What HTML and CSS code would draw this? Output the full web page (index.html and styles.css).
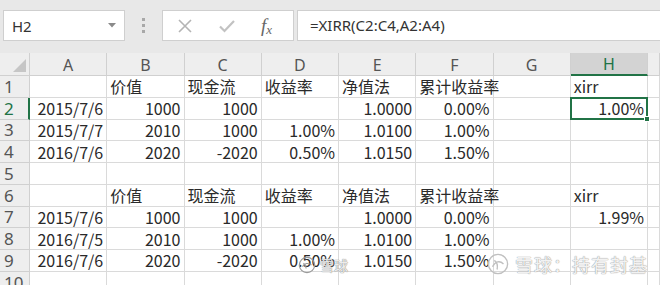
FILE: index.html
```html
<!DOCTYPE html>
<html lang="zh-CN">
<head>
<meta charset="utf-8">
<title>XIRR</title>
<link rel="stylesheet" href="styles.css">
</head>
<body>
<div class="app">
  <div class="toolbar">
    <div class="namebox">
      <span class="name">H2</span>
      <svg class="caret" width="8" height="5" viewBox="0 0 8 5"><path d="M0 0h8L4 4.5z" fill="#8a8a8a"/></svg>
    </div>
    <div class="grip"><i></i><i></i><i></i></div>
    <div class="btns">
      <svg width="16" height="16" viewBox="0 0 16 16"><path d="M2 2l12 12M14 2L2 14" stroke="#b4b4b4" stroke-width="1.6" fill="none"/></svg>
      <svg width="18" height="16" viewBox="0 0 18 16"><path d="M2 8.5l4.5 4.5L16 3" stroke="#c2c2c2" stroke-width="2.2" fill="none"/></svg>
      <span class="fx">f<sub>x</sub></span>
    </div>
    <div class="formula">=XIRR(C2:C4,A2:A4)</div>
  </div>

  <div class="sheet">
    <div class="hd corner"><span class="tri"></span></div>
    <div class="hd col">A</div><div class="hd col">B</div><div class="hd col">C</div><div class="hd col">D</div>
    <div class="hd col">E</div><div class="hd col">F</div><div class="hd col">G</div><div class="hd col sel">H</div><div class="hd col"></div>

    <div class="hd row">1</div>
    <div class="c"></div><div class="c">价值</div><div class="c">现金流</div><div class="c">收益率</div><div class="c">净值法</div><div class="c">累计收益率</div><div class="c"></div><div class="c">xirr</div><div class="c"></div>

    <div class="hd row sel">2</div>
    <div class="c n">2015/7/6</div><div class="c n">1000</div><div class="c n">1000</div><div class="c"></div><div class="c n">1.0000</div><div class="c n">0.00%</div><div class="c"></div><div class="c n active">1.00%<span class="handle"></span></div><div class="c"></div>

    <div class="hd row">3</div>
    <div class="c n">2015/7/7</div><div class="c n">2010</div><div class="c n">1000</div><div class="c n">1.00%</div><div class="c n">1.0100</div><div class="c n">1.00%</div><div class="c"></div><div class="c"></div><div class="c"></div>

    <div class="hd row">4</div>
    <div class="c n">2016/7/6</div><div class="c n">2020</div><div class="c n">-2020</div><div class="c n">0.50%</div><div class="c n">1.0150</div><div class="c n">1.50%</div><div class="c"></div><div class="c"></div><div class="c"></div>

    <div class="hd row">5</div>
    <div class="c"></div><div class="c"></div><div class="c"></div><div class="c"></div><div class="c"></div><div class="c"></div><div class="c"></div><div class="c"></div><div class="c"></div>

    <div class="hd row">6</div>
    <div class="c"></div><div class="c">价值</div><div class="c">现金流</div><div class="c">收益率</div><div class="c">净值法</div><div class="c">累计收益率</div><div class="c"></div><div class="c">xirr</div><div class="c"></div>

    <div class="hd row">7</div>
    <div class="c n">2015/7/6</div><div class="c n">1000</div><div class="c n">1000</div><div class="c"></div><div class="c n">1.0000</div><div class="c n">0.00%</div><div class="c"></div><div class="c n">1.99%</div><div class="c"></div>

    <div class="hd row">8</div>
    <div class="c n">2016/7/5</div><div class="c n">2010</div><div class="c n">1000</div><div class="c n">1.00%</div><div class="c n">1.0100</div><div class="c n">1.00%</div><div class="c"></div><div class="c"></div><div class="c"></div>

    <div class="hd row">9</div>
    <div class="c n">2016/7/6</div><div class="c n">2020</div><div class="c n">-2020</div><div class="c n">0.50%</div><div class="c n">1.0150</div><div class="c n">1.50%</div><div class="c"></div><div class="c"></div><div class="c"></div>

    <div class="hd row">10</div>
    <div class="c"></div><div class="c"></div><div class="c"></div><div class="c"></div><div class="c"></div><div class="c"></div><div class="c"></div><div class="c"></div><div class="c"></div>
  </div>

  <div class="mark small">
    <svg width="18" height="18" viewBox="0 0 20 20"><circle cx="10" cy="10" r="8.5" fill="none" stroke="#9a9a9a" stroke-width="1.3"/><path d="M5 12c2-4 6-5 10-2M6 8c2 1 3 3 3 6" stroke="#9a9a9a" stroke-width="1.2" fill="none"/></svg>
    <span>雪球</span>
  </div>
  <div class="mark big">
    <svg width="22" height="22" viewBox="0 0 24 24"><circle cx="12" cy="12" r="10.5" fill="none" stroke="#c0c0c0" stroke-width="1.5"/><path d="M6 15c3-6 8-7 12-3M8 8c3 2 4 5 3 10" stroke="#c0c0c0" stroke-width="1.5" fill="none"/></svg>
    <span>雪球：持有封基</span>
  </div>
</div>
</body>
</html>
```

FILE: styles.css
```css
* { box-sizing: border-box; }
html, body { margin: 0; padding: 0; }
body {
  width: 660px;
  height: 285px;
  overflow: hidden;
  background: #e8e8e8;
  font-family: "Noto Sans CJK SC", "Noto Sans", sans-serif;
  color: #333;
}
/* the window clips the sheet at its lower edge, mid-way through row 10 */
.app { position: relative; width: 660px; height: 285px; overflow: hidden; }

/* formula bar */
.toolbar {
  display: flex;
  align-items: center;
  height: 53px;
  padding: 0 0 2px 3px;
}
.namebox {
  width: 122px;
  height: 31px;
  background: #fff;
  border: 1px solid #cfcfcf;
  display: flex;
  align-items: center;
  justify-content: space-between;
  padding: 0 8px 0 8px;
}
.name { font-size: 15px; color: #333; font-family: "Noto Sans", sans-serif; }
.grip {
  width: 37px;
  display: flex;
  flex-direction: column;
  align-items: center;
  gap: 3px;
}
.grip i { width: 3px; height: 3px; background: #a8a8a8; display: block; }
.btns {
  width: 132px;
  height: 31px;
  background: #fff;
  border: 1px solid #cfcfcf;
  display: flex;
  align-items: center;
  gap: 25px;
  padding-left: 14px;
}
.fx {
  font-family: "Liberation Serif", serif;
  font-style: italic;
  font-size: 19px;
  color: #666;
  line-height: 1;
}
.fx sub { font-size: 13px; vertical-align: -2px; }
.formula {
  flex: 1;
  height: 31px;
  margin-left: 3px;
  background: #fff;
  border: 1px solid #cfcfcf;
  border-right: none;
  font-family: "Noto Sans", sans-serif;
  font-size: 15px;
  line-height: 29px;
  padding-left: 12px;
  color: #333;
}

/* sheet grid */
.sheet {
  display: grid;
  grid-template-columns: 30px repeat(8, 77.25px) 1fr;
  grid-template-rows: 23px repeat(10, 21.75px);
  background: #fff;
}
.hd {
  background: #eeeeee;
  color: #555;
  display: flex;
  align-items: center;
  justify-content: center;
  border-right: 1px solid #d0d0d0;
  border-bottom: 1px solid #d0d0d0;
}
.col { font-size: 16px; font-family: "Noto Sans", sans-serif; padding-top: 1px; }
.row { font-size: 17px; font-family: "Noto Sans", sans-serif; justify-content: flex-start; padding-left: 4px; color: #555; }
.corner { position: relative; }
.tri {
  position: absolute;
  right: 3px;
  bottom: 3px;
  width: 0;
  height: 0;
  border-left: 13px solid transparent;
  border-bottom: 13px solid #c6c6c6;
}
.col.sel { background: #d3d3d3; color: #217346; border-bottom: 2px solid #217346; }
.row.sel { color: #217346; border-right: 2px solid #217346; }

.c {
  border-right: 1px solid #dadada;
  border-bottom: 1px solid #dadada;
  font-size: 16px;
  line-height: 20px;
  padding: 0 3px;
  white-space: nowrap;
  overflow: visible;
  display: flex;
  align-items: center;
  color: #2a2a2a;
}
.c.n { justify-content: flex-end; }
.c.active {
  position: relative;
  border: 2px solid #217346;
  margin: -1px 0 0 -1px;
  padding-right: 2px;
}
.handle {
  position: absolute;
  right: -4px;
  bottom: -4px;
  width: 6px;
  height: 6px;
  background: #217346;
  border: 1px solid #fff;
}

/* watermarks */
.mark {
  position: absolute;
  display: flex;
  align-items: center;
  gap: 4px;
  white-space: nowrap;
  pointer-events: none;
}
.mark.small { left: 298px; top: 255px; }
.mark.small span {
  font-size: 14px;
  color: rgba(255,255,255,0.85);
  text-shadow: 0 0 1px #888, 0 0 1px #888;
}
.mark.big { left: 487px; top: 252px; gap: 6px; }
.mark.big span {
  font-size: 18px;
  line-height: 24px;
  color: rgba(255,255,255,0.9);
  text-shadow: 0 0 1px #999, 0 0 1px #999;
  letter-spacing: 1px;
}
```
